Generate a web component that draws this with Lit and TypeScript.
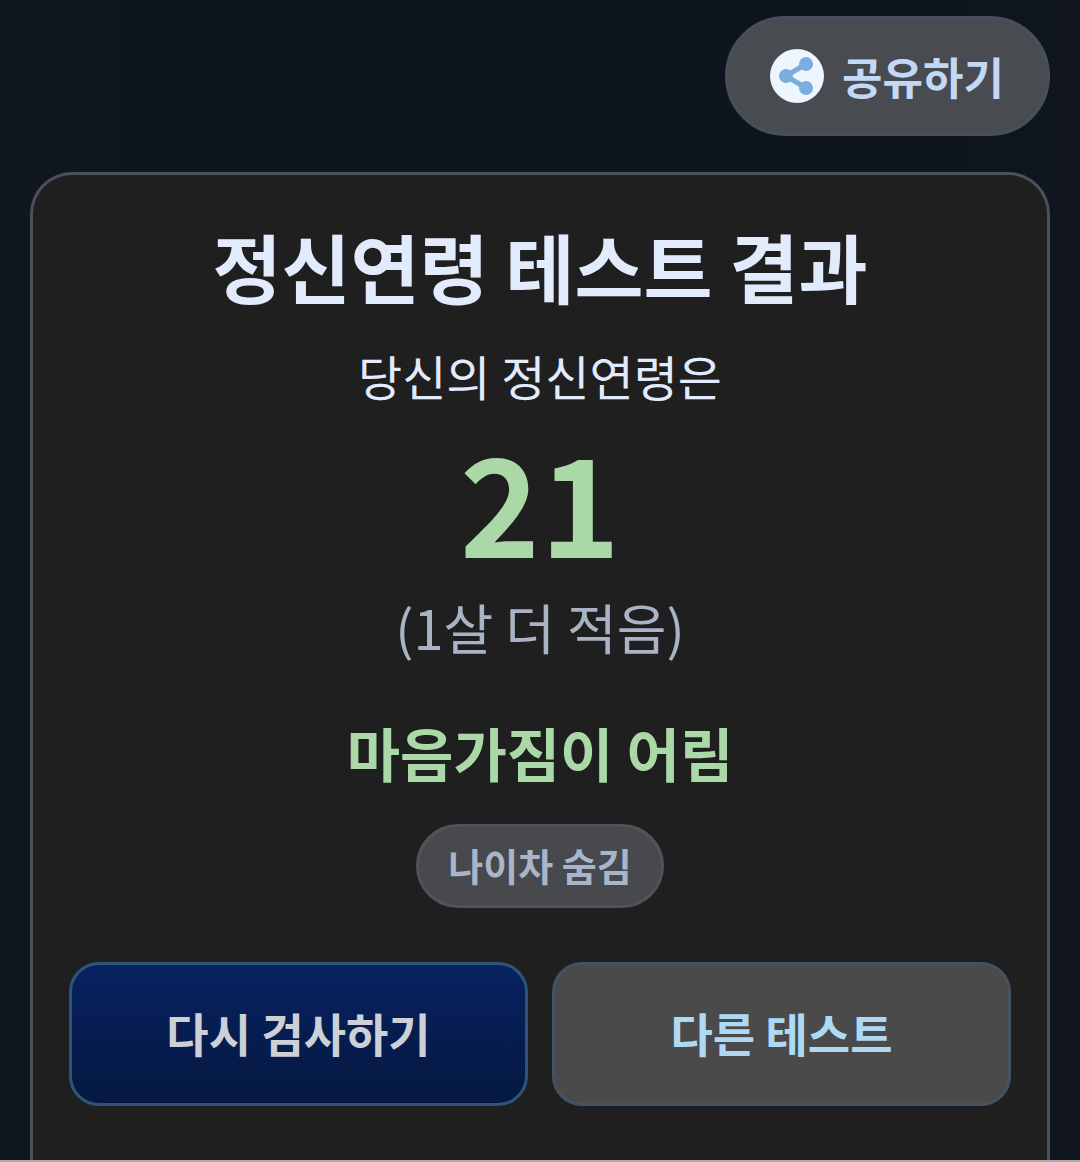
import { LitElement, html, css } from "lit";
import { customElement } from "lit/decorators.js";

@customElement("app-root")
class AppRoot extends LitElement {
  static styles = css`
    :host { display: block; font-family: "Noto Sans CJK KR", sans-serif; color: #e2ebfc; }
    * { box-sizing: border-box; }
    .page { min-height: 100vh; display: flex; flex-direction: column; padding: 16px 30px 0; border-bottom: 2px solid #adadad; background: linear-gradient(90deg, #10171f, #0f151e 12%, #0f151e 88%, #10151e); }
    .top { display: flex; justify-content: flex-end; margin-bottom: 36px; }
    button { font: inherit; font-weight: 700; cursor: pointer; margin: 0; }
    .share { display: flex; align-items: center; gap: 18px; height: 120px; padding: 0 43px 0 42px; border: 3px solid #46505d; border-radius: 60px; background: #484b4f; color: #c3d8f5; font-size: 44px; }
    .icon { width: 54px; height: 54px; }
    .card { flex: 1; display: flex; flex-direction: column; align-items: center; padding: 36px 36px 54px; border: 3px solid #4b505a; border-bottom: 0; border-radius: 42px 42px 0 0; background: #1f1f1f; text-align: center; }
    h1 { margin: 0; font-size: 75px; line-height: 110px; font-weight: 700; }
    p { margin: 0; }
    .lead { font-size: 48px; line-height: 72px; margin-top: 18px; }
    .age { font-size: 136px; line-height: 136px; font-weight: 700; color: #abd8a7; margin-top: 20px; }
    .diff { font-size: 54px; line-height: 80px; color: #a9b3c6; margin-top: 20px; }
    .mind { font-size: 58px; line-height: 80px; font-weight: 700; color: #abd8a7; margin-top: 45px; }
    .hide { height: 84px; margin-top: 32px; padding: 0 29px 4px; border: 3px solid #50535a; border-radius: 42px; background: #48494c; color: #a9b5c8; font-size: 38px; }
    .actions { display: grid; grid-template-columns: 1fr 1fr; gap: 24px; width: 100%; margin-top: 54px; }
    .action { height: 144px; padding: 0 6px 4px; border: 3px solid #455261; border-radius: 30px; background: #4a4a4a; color: #aed9f5; font-size: 46px; }
    .primary { border-color: #2e5578; background: linear-gradient(#082262, #051840); color: #cdd0d5; }
  `;
  render() {
    return html`<main class="page">
      <div class="top"><button class="share"><svg class="icon" viewBox="0 0 54 54" aria-hidden="true"><circle cx="27" cy="27" r="27" fill="#edf6ff"/><path d="M36 15 16 27l20 12" fill="none" stroke="#7aade0" stroke-width="5"/><g fill="#7aade0"><circle cx="36" cy="15" r="7"/><circle cx="16" cy="27" r="7"/><circle cx="36" cy="39" r="7"/></g></svg><span>공유하기</span></button></div>
      <section class="card">
        <h1>정신연령 테스트 결과</h1>
        <p class="lead">당신의 정신연령은</p>
        <p class="age">21</p>
        <p class="diff">(1살 더 적음)</p>
        <p class="mind">마음가짐이 어림</p>
        <button class="hide">나이차 숨김</button>
        <div class="actions"><button class="action primary">다시 검사하기</button><button class="action">다른 테스트</button></div>
      </section>
    </main>`;
  }
}
